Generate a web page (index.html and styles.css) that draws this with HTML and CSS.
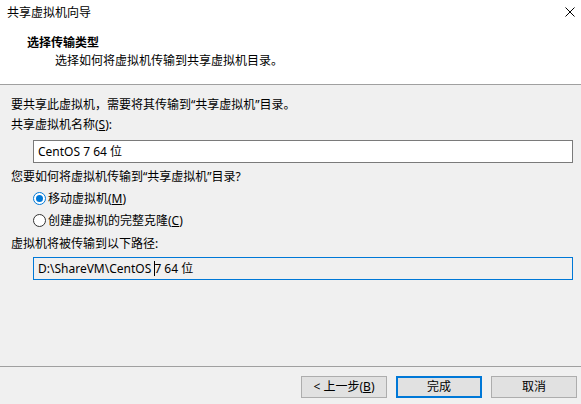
FILE: index.html
```html
<!DOCTYPE html>
<html lang="zh-CN">
<head>
<meta charset="utf-8">
<title>共享虚拟机向导</title>
<link rel="stylesheet" href="styles.css">
</head>
<body>
<div class="dialog">
  <div class="header">
    <div class="titlebar">
      <span class="title">共享虚拟机向导</span>
      <svg class="close" width="10" height="10" viewBox="0 0 10 10"><path d="M0.5 0.5 L9.5 9.5 M9.5 0.5 L0.5 9.5" stroke="#000" stroke-width="1" fill="none"/></svg>
    </div>
    <div class="heading">选择传输类型</div>
    <div class="subtitle">选择如何将虚拟机传输到共享虚拟机目录。</div>
  </div>
  <div class="content">
    <div class="line">要共享此虚拟机，需要将其传输到“共享虚拟机”目录。</div>
    <div class="line">共享虚拟机名称(<u>S</u>):</div>
    <div class="field">CentOS 7 64 位</div>
    <div class="line q">您要如何将虚拟机传输到“共享虚拟机”目录?</div>
    <div class="radio-row"><span class="radio checked"></span><span>移动虚拟机(<u>M</u>)</span></div>
    <div class="radio-row"><span class="radio"></span><span>创建虚拟机的完整克隆(<u>C</u>)</span></div>
    <div class="line p">虚拟机将被传输到以下路径:</div>
    <div class="field readonly">D:\ShareVM\CentOS <span class="caret"></span>7 64 位</div>
  </div>
  <div class="footer">
    <button class="btn">&lt; 上一步(<u>B</u>)</button>
    <button class="btn default">完成</button>
    <button class="btn">取消</button>
  </div>
</div>
</body>
</html>
```
FILE: styles.css
```css
html, body {
  margin: 0;
  padding: 0;
}
body {
  width: 581px;
  height: 404px;
  overflow: hidden;
  background: #f0f0f0;
  font-family: "Noto Sans", "Noto Sans CJK SC", sans-serif;
  font-size: 12px;
  color: #000;
}
.dialog {
  width: 581px;
  height: 404px;
  display: flex;
  flex-direction: column;
}
.header {
  background: #fff;
  height: 84px;
  border-bottom: 1px solid #a0a0a0;
  flex: none;
}
.titlebar {
  height: 26px;
  display: flex;
  align-items: center;
  justify-content: space-between;
  padding: 0 6px 0 7px;
}
.title {
  line-height: 26px;
}
.close {
  display: block;
  margin-top: -2px;
}
.heading {
  font-weight: bold;
  line-height: 18px;
  margin-top: 8px;
  padding-left: 27px;
}
.subtitle {
  line-height: 18px;
  padding-left: 55px;
}
.content {
  flex: 1;
  padding: 10px 8px 0 11px;
  display: flex;
  flex-direction: column;
}
.line {
  line-height: 20px;
}
.q {
  margin-top: 4px;
}
.p {
  margin-top: 3px;
}
.field {
  margin: 5px 0 0 22px;
  height: 23px;
  box-sizing: border-box;
  border: 1px solid #7a7a7a;
  background: #fff;
  padding: 0 4px;
  line-height: 21px;
  white-space: nowrap;
}
.field.readonly {
  margin-top: 3px;
  border-color: #0078d7;
  background: #f0f0f0;
}
.caret {
  display: inline-block;
  width: 0;
  height: 15px;
  border-left: 1px solid #000;
  vertical-align: -3px;
  margin-right: -1px;
}
.radio-row {
  display: flex;
  align-items: center;
  height: 22px;
  padding-left: 22px;
  gap: 2px;
}
.radio {
  width: 13px;
  height: 13px;
  box-sizing: border-box;
  border: 1px solid #333;
  border-radius: 50%;
  background: #fff;
  display: flex;
  align-items: center;
  justify-content: center;
}
.radio.checked {
  border-color: #0078d7;
}
.radio.checked::after {
  content: "";
  width: 7px;
  height: 7px;
  border-radius: 50%;
  background: #0078d7;
}
.footer {
  flex: none;
  border-top: 1px solid #a0a0a0;
  padding: 9px 4px 6px 0;
  display: flex;
  justify-content: flex-end;
  gap: 9px;
}
.btn {
  width: 86px;
  height: 22px;
  box-sizing: border-box;
  border: 1px solid #adadad;
  background: #e1e1e1;
  font-family: inherit;
  font-size: 12px;
  color: #000;
  padding: 0;
  margin: 0;
  line-height: 18px;
}
.btn.default {
  border: 2px solid #0078d7;
}
u {
  text-decoration: underline;
  text-underline-offset: 1px;
}
```
